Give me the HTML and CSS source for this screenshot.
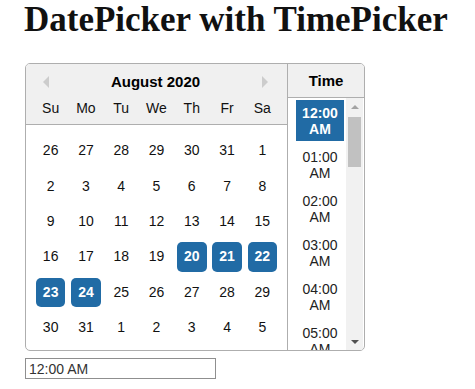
FILE: index.html
```html
<!DOCTYPE html>
<html>
<head>
<meta charset="utf-8">
<link rel="stylesheet" href="styles.css">
</head>
<body>
<div class="page">
  <h1 class="title">DatePicker with TimePicker</h1>
  <div class="picker">
    <div class="cal">
      <div class="cal-head">
        <div class="month-row">
          <span class="nav nav-prev"></span>
          <span class="month-title">August 2020</span>
          <span class="nav nav-next"></span>
        </div>
        <div class="day-names">
          <span class="cell">Su</span><span class="cell">Mo</span><span class="cell">Tu</span><span class="cell">We</span><span class="cell">Th</span><span class="cell">Fr</span><span class="cell">Sa</span>
        </div>
      </div>
      <div class="month">
        <div class="week"><span class="cell">26</span><span class="cell">27</span><span class="cell">28</span><span class="cell">29</span><span class="cell">30</span><span class="cell">31</span><span class="cell">1</span></div>
        <div class="week"><span class="cell">2</span><span class="cell">3</span><span class="cell">4</span><span class="cell">5</span><span class="cell">6</span><span class="cell">7</span><span class="cell">8</span></div>
        <div class="week"><span class="cell">9</span><span class="cell">10</span><span class="cell">11</span><span class="cell">12</span><span class="cell">13</span><span class="cell">14</span><span class="cell">15</span></div>
        <div class="week"><span class="cell">16</span><span class="cell">17</span><span class="cell">18</span><span class="cell">19</span><span class="cell sel">20</span><span class="cell sel">21</span><span class="cell sel">22</span></div>
        <div class="week"><span class="cell sel">23</span><span class="cell sel">24</span><span class="cell">25</span><span class="cell">26</span><span class="cell">27</span><span class="cell">28</span><span class="cell">29</span></div>
        <div class="week"><span class="cell">30</span><span class="cell">31</span><span class="cell">1</span><span class="cell">2</span><span class="cell">3</span><span class="cell">4</span><span class="cell">5</span></div>
      </div>
    </div>
    <div class="time">
      <div class="time-head">Time</div>
      <div class="time-body">
        <ul class="time-list">
          <li class="time-item sel">12:00<br>AM</li>
          <li class="time-item">01:00<br>AM</li>
          <li class="time-item">02:00<br>AM</li>
          <li class="time-item">03:00<br>AM</li>
          <li class="time-item">04:00<br>AM</li>
          <li class="time-item">05:00<br>AM</li>
        </ul>
        <div class="scrollbar">
          <span class="sb-btn"><span class="tri-up"></span></span>
          <span class="sb-thumb"></span>
          <span class="sb-track"></span>
          <span class="sb-btn"><span class="tri-down"></span></span>
        </div>
      </div>
    </div>
  </div>
  <div class="input-row">
    <input class="time-input" type="text" value="12:00 AM">
  </div>
</div>
</body>
</html>
```

FILE: styles.css
```css
html, body {
  margin: 0;
  padding: 0;
  background: #ffffff;
}

.page {
  padding: 0 0 0 24px;
  font-family: "Liberation Sans", Arial, sans-serif;
}

.title {
  margin: 0;
  font-family: "Liberation Serif", "Times New Roman", serif;
  font-weight: bold;
  font-size: 35px;
  line-height: 40px;
  color: #111111;
}

.picker {
  margin-top: 23px;
  margin-left: 1px;
  display: inline-flex;
  align-items: flex-start;
  border: 1px solid #aeaeae;
  border-radius: 5px;
  font-size: 14px;
  color: #111111;
  overflow: hidden;
}

.cal {
  width: 261px;
}

.cal-head {
  background: #f0f0f0;
  border-bottom: 1px solid #aeaeae;
  padding: 9px 0 0;
}

.month-row {
  display: flex;
  align-items: center;
  justify-content: space-between;
  height: 17px;
  padding: 0 19px 0 17px;
}

.month-title {
  font-weight: bold;
  font-size: 15px;
  line-height: 17px;
  color: #000;
}

.nav {
  width: 0;
  height: 0;
  border-top: 6px solid transparent;
  border-bottom: 6px solid transparent;
}

.nav-prev {
  border-right: 6px solid #cccccc;
}

.nav-next {
  border-left: 6px solid #cccccc;
}

.day-names {
  display: flex;
  margin-top: 4px;
  padding: 0 7px;
}

.cell {
  width: 29.6px;
  height: 29.6px;
  line-height: 29.6px;
  margin: 0 2.85px;
  text-align: center;
  border-radius: 5px;
  color: #111;
}

.month {
  padding: 9px 7px 5px;
}

.week {
  display: flex;
}

.week .cell {
  margin: 2.85px;
}

.cell.sel {
  background: #216ba5;
  color: #ffffff;
  font-weight: bold;
}

.time {
  width: 76px;
  border-left: 1px solid #aeaeae;
}

.time-head {
  background: #f0f0f0;
  border-bottom: 1px solid #aeaeae;
  height: 33px;
  line-height: 34px;
  text-align: center;
  font-weight: bold;
  font-size: 15px;
  color: #000;
}

.time-body {
  display: flex;
  overflow: hidden;
  height: 252px;
}

.time-list {
  list-style: none;
  margin: 0;
  padding: 2px 0 0 8px;
  width: 58px;
  height: 252px;
  box-sizing: border-box;
  overflow: hidden;
  flex: none;
}

.time-item {
  width: 48px;
  height: 41px;
  box-sizing: border-box;
  padding: 6px 0 4px;
  margin-bottom: 3px;
  line-height: 15.5px;
  text-align: center;
  color: #222;
}

.time-item.sel {
  background: #216ba5;
  color: #ffffff;
  font-weight: bold;
}

.scrollbar {
  width: 17px;
  height: 252px;
  background: #f1f1f1;
  display: flex;
  flex-direction: column;
  flex: none;
}

.sb-btn {
  height: 17px;
  display: flex;
  align-items: center;
  justify-content: center;
  flex: none;
}

.sb-thumb {
  margin: 2px 2px 0;
  height: 50px;
  background: #c1c1c1;
  flex: none;
}

.sb-track {
  flex: 1;
}

.tri-up {
  width: 0;
  height: 0;
  border-left: 4px solid transparent;
  border-right: 4px solid transparent;
  border-bottom: 4px solid #a3a3a3;
}

.tri-down {
  width: 0;
  height: 0;
  border-left: 4px solid transparent;
  border-right: 4px solid transparent;
  border-top: 4px solid #505050;
}

.input-row {
  margin-top: 7px;
  margin-left: 1px;
}

.time-input {
  display: block;
  box-sizing: border-box;
  width: 191px;
  height: 21px;
  margin: 0;
  padding: 0 3px;
  border: 1px solid #8f8f8f;
  font-family: "Liberation Sans", Arial, sans-serif;
  font-size: 14px;
  color: #333;
  outline: none;
}
```
